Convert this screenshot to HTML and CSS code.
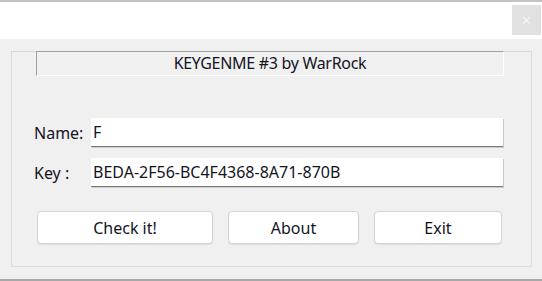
FILE: index.html
```html
<!DOCTYPE html>
<html lang="en">
<head>
    <meta charset="UTF-8">
    <meta name="viewport" content="width=device-width, initial-scale=1.0">
    <title>KEYGENME #3</title>
    <link rel="stylesheet" href="styles.css">
</head>
<body>
    <div class="window">
        <div class="top-strip"></div>
        <div class="titlebar">
            <div class="close-btn">&#x2715;</div>
        </div>
        <div class="client">
            <div class="group">
                <div class="caption">KEYGENME #3 by WarRock</div>
                <div class="row first">
                    <label class="field-label" for="name">Name:</label>
                    <input class="edit" type="text" id="name" value="F">
                </div>
                <div class="row">
                    <label class="field-label" for="key">Key :</label>
                    <input class="edit" type="text" id="key" value="BEDA-2F56-BC4F4368-8A71-870B">
                </div>
                <div class="buttons">
                    <button class="btn btn-check">Check it!</button>
                    <button class="btn btn-about">About</button>
                    <button class="btn btn-exit">Exit</button>
                </div>
            </div>
        </div>
        <div class="bottom-strip"></div>
    </div>
</body>
</html>
```

FILE: styles.css
```css
* {
    box-sizing: border-box;
}
body {
    margin: 0;
    font-family: "Noto Sans", "Open Sans", Arial, sans-serif;
    font-size: 16px;
    color: #14141f;
    background: #f0f0f0;
}
.window {
    width: 542px;
    height: 281px;
    display: flex;
    flex-direction: column;
    overflow: hidden;
}
.top-strip {
    height: 2px;
    background: #c4c4c4;
}
.titlebar {
    height: 37px;
    background: #fff;
    display: flex;
    justify-content: flex-end;
    padding-top: 3px;
    padding-right: 1px;
}
.close-btn {
    width: 29px;
    height: 30px;
    background: #e1e1e1;
    color: #f4f4f4;
    font-size: 13px;
    display: flex;
    align-items: center;
    justify-content: center;
}
.client {
    flex: 1;
    background: #f0f0f0;
    padding: 12px 0 0 11px;
}
.group {
    width: 521px;
    height: 216px;
    border: 1px solid #dcdcdc;
    border-top-color: #d8d8d8;
}
.caption {
    margin-left: 24px;
    margin-top: -1px;
    width: 468px;
    height: 25px;
    border-top: 1px solid #a0a0a0;
    border-left: 1px solid #a0a0a0;
    border-right: 1px solid #fff;
    border-bottom: 1px solid #fff;
    text-align: center;
    line-height: 23px;
    letter-spacing: -0.3px;
}
.row {
    display: flex;
    align-items: center;
    padding-left: 22px;
    margin-top: 11px;
}
.row.first {
    margin-top: 42px;
}
.field-label {
    width: 57px;
}
.edit {
    width: 412px;
    height: 29px;
    border: none;
    border-bottom: 1px solid #7c7c7c;
    box-shadow: 1px 1px 0 #c9c9c9;
    background: #fff;
    font: inherit;
    color: inherit;
    padding: 0 2px;
    outline: none;
}
.buttons {
    display: flex;
    gap: 15px;
    padding-left: 25px;
    margin-top: 24px;
}
.btn {
    height: 33px;
    background: #fff;
    border: 1px solid #d3d3d3;
    border-radius: 4px;
    box-shadow: 0 1px 1px rgba(0,0,0,0.08);
    font: inherit;
    color: inherit;
}
.btn-check {
    width: 176px;
}
.btn-about {
    width: 131px;
}
.btn-exit {
    width: 128px;
}
.bottom-strip {
    height: 2px;
    background: #a8a8a8;
}
```
